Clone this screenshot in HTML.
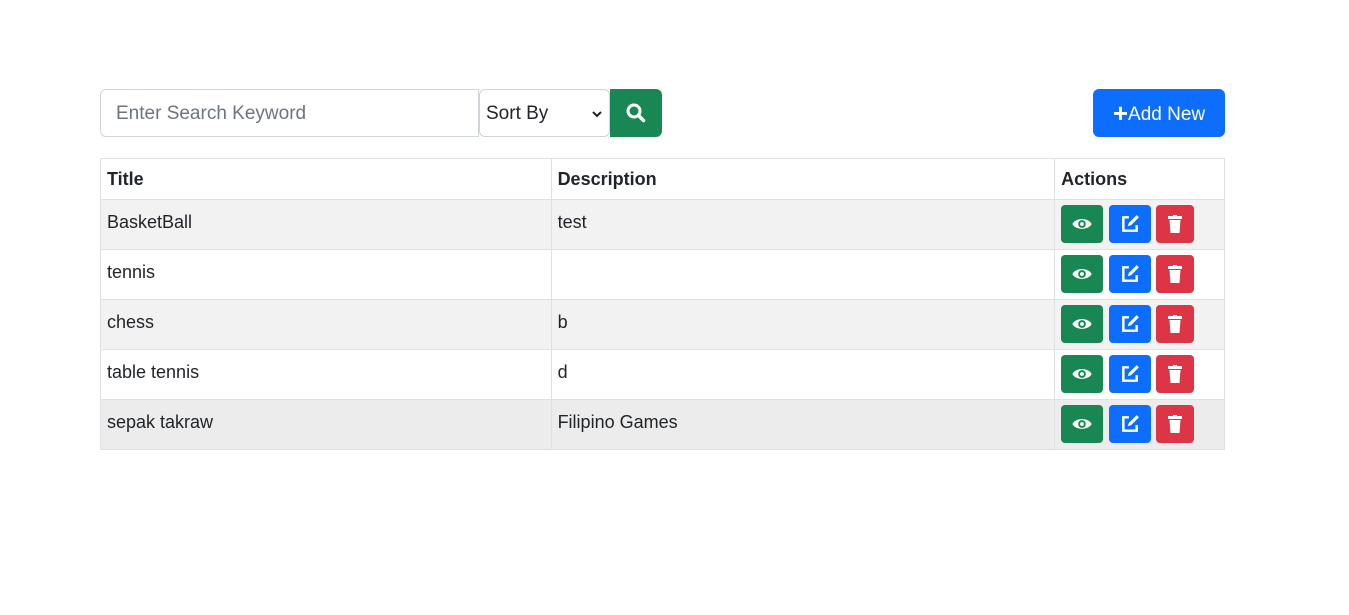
<!DOCTYPE html>
<html><head><style>
body{margin:0;background:#fff;font-family:"Liberation Sans",sans-serif;color:#212529;}
.wrap{position:absolute;left:100px;top:89px;width:1125px;}
.inp{position:absolute;left:0;top:0;width:379px;height:48px;border:1px solid #ced4da;border-radius:6px 0 0 6px;box-sizing:border-box;font-size:19px;color:#6c757d;padding:13px 15px;}
.sel{position:absolute;left:379px;top:0;width:131px;height:48px;border:1px solid #ced4da;border-radius:6px;box-sizing:border-box;font-size:19px;padding:13px 6px;}
.sel .ar{position:absolute;right:6px;top:14px;}
.sb{position:absolute;left:510px;top:0;width:52px;height:48px;background:#198754;border-radius:0 6px 6px 0;}
.add{position:absolute;left:993px;top:0;width:132px;height:48px;background:#0d6efd;border-radius:6px;color:#fff;font-size:19px;line-height:48px;text-align:center;}
table{position:absolute;left:100px;top:158px;border-collapse:collapse;width:1125px;font-size:18px;}
td,th{border:1px solid #dee2e6;padding:0 6px;text-align:left;vertical-align:top;}
th{height:39px;line-height:40px;font-weight:bold;padding:0 6px;}
td{height:49px;line-height:44px;}
tr.s td{background:#f2f2f2;}
tr.s2 td{background:#ececec;}
.b{display:inline-block;width:42px;height:38px;border-radius:4px;margin-top:5px;margin-right:6px;vertical-align:top;position:relative;}
.b svg{position:absolute;left:50%;top:50%;transform:translate(-50%,-50%);}
</style></head><body>
<div class="wrap">
<div class="inp">Enter Search Keyword</div>
<div class="sel">Sort By<svg class="ar" width="12" height="20" viewBox="0 0 12 20"><path d="M2 8l4 4 4-4" stroke="#222" stroke-width="2" fill="none"/></svg></div>
<div class="sb"><svg width="52" height="48" viewBox="0 0 52 48"><circle cx="24" cy="22" r="6" stroke="#fff" stroke-width="3" fill="none"/><path d="M28.5 26.5l5 5" stroke="#fff" stroke-width="3.5" stroke-linecap="round"/></svg></div>
<div class="add"><b style="font-size:26px;vertical-align:-2px">+</b>Add New</div>
</div>
<table>
<colgroup><col style="width:451px"><col style="width:504px"><col style="width:170px"></colgroup>
<tr><th>Title</th><th>Description</th><th>Actions</th></tr>
<tr class="s"><td>BasketBall</td><td>test</td><td class="a"></td></tr>
<tr><td>tennis</td><td></td><td class="a"></td></tr>
<tr class="s"><td>chess</td><td>b</td><td class="a"></td></tr>
<tr><td>table tennis</td><td>d</td><td class="a"></td></tr>
<tr class="s2"><td>sepak takraw</td><td>Filipino Games</td><td class="a"></td></tr>
</table>
<script>
var h='<span class="b" style="background:#198754"><svg width="22" height="15" viewBox="0 0 20 14"><path d="M1 7C4 1 16 1 19 7C16 13 4 13 1 7Z" fill="#fff"/><circle cx="10" cy="7" r="3.6" fill="#198754"/><circle cx="10" cy="7" r="1.8" fill="#fff"/></svg></span><span class="b" style="background:#0d6efd;margin-right:5px"><svg width="20" height="20" viewBox="0 0 18 18"><path d="M8 3H3v12h12v-5" stroke="#fff" stroke-width="2.2" fill="none"/><path d="M7 11l1-3 7-7 2 2-7 7z" fill="#fff"/></svg></span><span class="b" style="background:#dc3545;width:38px"><svg width="14" height="18" viewBox="0 0 14 18"><rect x="0" y="1" width="14" height="3" fill="#fff"/><rect x="5" y="0" width="4" height="2" fill="#fff"/><path d="M1.5 5h11l-1 13h-9z" fill="#fff"/></svg></span>';
document.querySelectorAll('td.a').forEach(function(t){t.innerHTML=h;});
</script>
</body></html>
